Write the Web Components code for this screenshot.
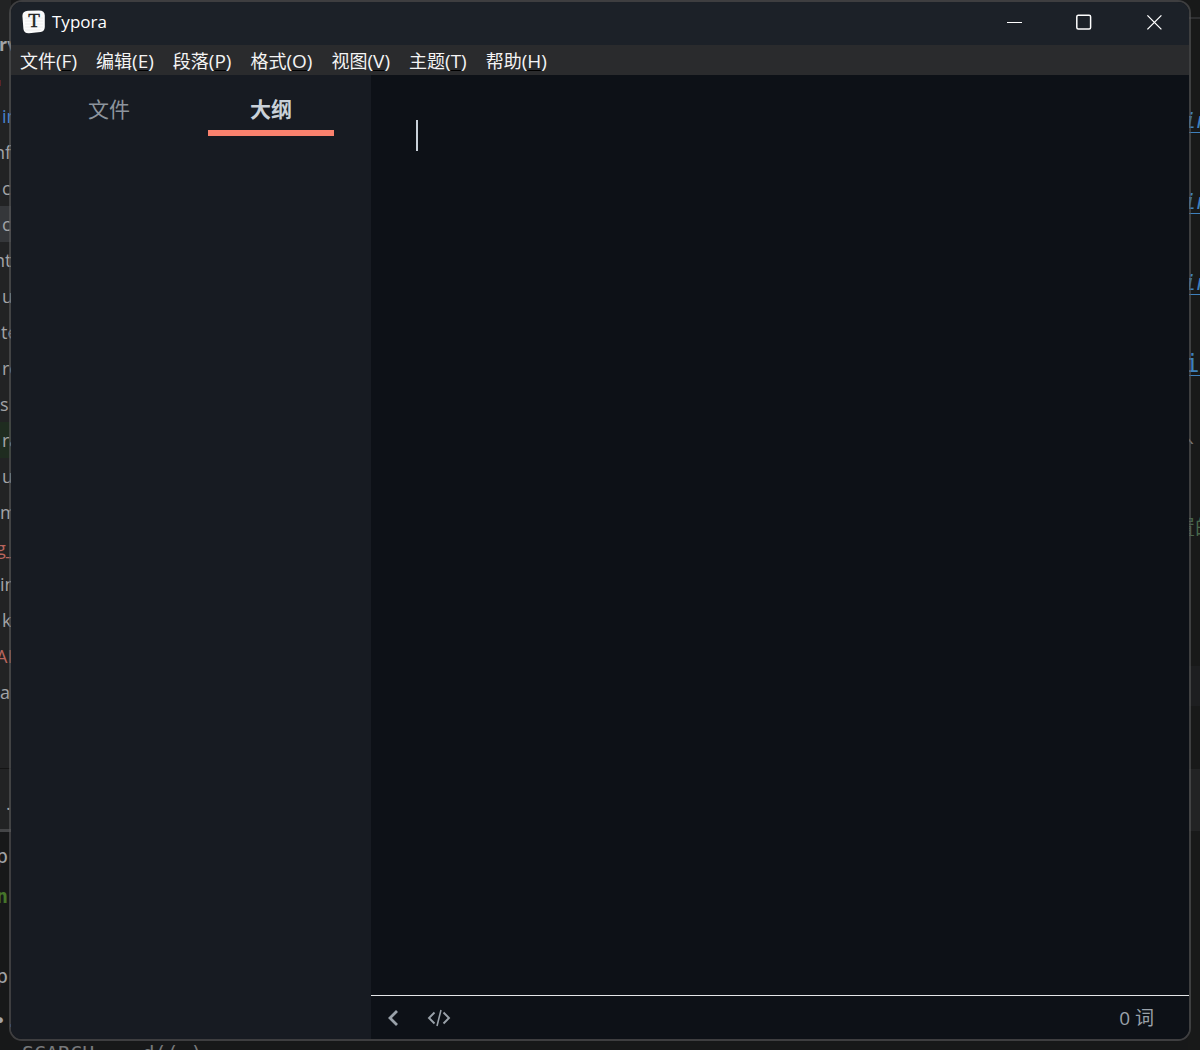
<!DOCTYPE html>
<html lang="zh-CN">
<head>
<meta charset="utf-8">
<title>Typora</title>
<style>
html, body { height: 100%; margin: 0; }
body { background: #171819; overflow: hidden; font-family: "Open Sans", "Noto Sans CJK SC", sans-serif; }
</style>
</head>
<body>
<desktop-scene></desktop-scene>
<script>
const define = (name, html) => {
  const template = document.createElement('template');
  template.innerHTML = html;
  customElements.define(name, class extends HTMLElement {
    constructor() {
      super();
      this.attachShadow({ mode: 'open' }).append(template.content.cloneNode(true));
    }
  });
};

/* editor window that sits behind: left edge */
define('back-explorer', `
<style>
:host { display: flex; flex-direction: column; overflow: hidden; background: #222324; color: #a2a4a7; font: 18px/36px "Open Sans", sans-serif; white-space: pre; }
.head, .row { flex: none; box-sizing: border-box; }
.head { height: 98px; padding-top: 26px; font-weight: 700; }
.head span { display: block; text-indent: -1px; }
.dot { width: 1px; height: 6px; margin-top: 18px; background: #5c2528; }
.row { height: 36px; padding-left: 2px; }
.cut { padding-left: 0; text-indent: -6px; }
.wide { text-indent: -10px; }
.zero { padding-left: 0; }
.blue { color: #4a83cf; }
.red { color: #b8655d; }
.low { text-indent: -4px; }
.on { background: #35373a; }
.new { background: #1f2c20; }
.foot { flex: none; box-sizing: border-box; height: 61px; margin-top: 58px; border-top: 1px solid #141414; padding: 16px 0 0 6px; }
.term { flex: 1; border-top: 3px solid #444547; padding-top: 4px; background: #171819; font: 20px/40px "DejaVu Sans Mono", monospace; }
.term div { height: 40px; text-indent: -4px; }
.term .last { padding-top: 4px; text-indent: -6px; }
.green { color: #45752a; font-weight: 700; }
</style>
<div class="head"><span>rv</span><div class="dot"></div></div>
<div class="row blue">in</div>
<div class="row cut">nf</div>
<div class="row">c</div>
<div class="row on">c</div>
<div class="row cut">nt</div>
<div class="row">u</div>
<div class="row cut wide">ute</div>
<div class="row">re</div>
<div class="row zero">s</div>
<div class="row new">ra</div>
<div class="row">u</div>
<div class="row zero">m</div>
<div class="row red cut low">g_</div>
<div class="row zero">in</div>
<div class="row">k</div>
<div class="row red cut low">AI</div>
<div class="row zero">al</div>
<div class="foot">.</div>
<div class="term"><div>p</div><div class="green">n(</div><div></div><div>p:</div><div class="last">•.</div></div>
`);

/* editor window that sits behind: right edge */
define('back-editor', `
<style>
:host { display: flex; flex-direction: column; overflow: hidden; background: #181919; font: 24px/36px "DejaVu Sans Mono", "Noto Sans CJK SC", monospace; white-space: pre; }
.top { flex: none; height: 17px; }
.rule { flex: none; height: 2px; margin-bottom: 84px; background: #2e2f31; }
a { flex: none; height: 36px; margin-bottom: 45px; color: #3e80bd; font-size: 22px; font-style: italic; text-indent: -5px; text-decoration: underline; text-underline-offset: 4px; text-decoration-thickness: 1px; }
a.upright { font-style: normal; font-size: 24px; text-indent: -3px; text-underline-offset: 3px; margin-bottom: 46px; }
.mark { flex: none; height: 36px; margin-bottom: 46px; color: #777; font-size: 20px; text-indent: -6px; }
.note { flex: none; height: 36px; margin-bottom: 120px; color: #47664a; font-size: 20px; text-indent: -13px; }
.band { flex: none; height: 40px; margin-bottom: 63px; background: #1d1e20; }
.panel { flex: none; height: 62px; background: #222324; }
</style>
<div class="top"></div><div class="rule"></div>
<a href="#">in</a><a href="#">in</a><a href="#">in</a><a href="#" class="upright">i </a>
<div class="mark">^</div>
<div class="note">置的</div>
<div class="band"></div><div class="panel"></div>
`);

define('app-logo', `
<style>:host { display: block; } svg { display: block; }
text { font: 19px "Liberation Serif", serif; fill: #222; stroke: #222; stroke-width: .4; }</style>
<svg width="24" height="24" viewBox="0 0 24 24" aria-hidden="true">
<path d="M6 .8 17 .6Q22.6.8 22.8 5.4L22.8 17Q22.6 21.6 18.6 22L7 23.2Q2 23.4 1.4 19L.4 6Q.4 1.2 6 .8Z" fill="#fbfbfb"/>
<path d="M3 8H21M3 11H21M3 14H21M3 17H21M3 20H19" stroke="#ececec"/>
<text x="12" y="17" text-anchor="middle">T</text></svg>
`);

define('title-bar', `
<style>
:host { display: flex; align-items: center; height: 43px; padding-bottom: 3px; box-sizing: border-box; background: #1c2128; color: #fff; }
app-logo { margin-left: 11px; }
.name { flex: 1; margin-left: 6px; font: 17px/24px "Open Sans", sans-serif; }
.controls { display: flex; height: 100%; }
button { width: 70px; padding: 0; border: 0; background: none; color: inherit; display: grid; place-items: center; }
svg { display: block; fill: none; stroke: currentColor; }
</style>
<app-logo></app-logo><span class="name"><slot></slot></span>
<div class="controls">
<button aria-label="最小化"><svg width="16" height="16"><path d="M1 8.5H16"/></svg></button>
<button aria-label="最大化"><svg width="16" height="16"><rect x=".8" y="1.2" width="13.8" height="13.8" rx="1.5" stroke-width="1.5"/></svg></button>
<button aria-label="关闭"><svg width="16" height="16"><path d="M1.4 1.4 15.4 15.4M15.4 1.4 1.4 15.4" stroke-width="1.3"/></svg></button>
</div>
`);

define('menu-item', `
<style>
:host { display: block; }
button { display: block; padding: 0; border: 0; background: none; color: #f4f4f4; font: 19px/30px "Open Sans", "Noto Sans CJK SC", sans-serif; white-space: nowrap; }
.label { font-size: 18px; }
u { text-decoration-color: #000; text-decoration-thickness: 1px; text-underline-offset: 2px; }
</style>
<button><span class="label"><slot></slot></span>(<u><slot name="key"></slot></u>)</button>
`);

define('menu-bar', `
<style>
:host { display: flex; gap: 19px; height: 30px; padding: 1px 9px 0; box-sizing: border-box; background: #2a2b2d; }
</style>
<slot></slot>
`);

define('side-bar', `
<style>
:host { display: block; box-sizing: border-box; width: 360px; padding: 0 19px 0 17px; background: #171b22; }
nav { display: flex; }
button { flex: 1; height: 61px; margin: 0 18px; padding: 10px 0 0; box-sizing: border-box; border: 0; border-bottom: 6px solid transparent; background: none; color: #8d949d; font: 21px/40px "Noto Sans CJK SC", sans-serif; }
button[aria-selected="true"] { border-color: #fa826e; color: #c9d1d9; font-weight: 700; }
</style>
<nav role="tablist"><button role="tab" aria-selected="false">文件</button><button role="tab" aria-selected="true">大纲</button></nav>
`);

define('writing-area', `
<style>
:host { display: block; flex: 1; padding: 45px; background: #0d1117; }
.caret { width: 2px; height: 31px; background: #c9d1d9; }
</style>
<div class="caret"></div>
`);

define('status-bar', `
<style>
:host { display: flex; align-items: center; box-sizing: border-box; height: 44px; padding: 0 35px 0 10px; border-top: 1px solid #e4e6e8; background: #0d1117; color: #8b949e; }
button { padding: 0; border: 0; background: none; color: #9aa2aa; display: grid; place-items: center; height: 43px; }
.back { width: 24px; }
.code { width: 26px; margin-left: 21px; }
.count { margin-left: auto; font: 19px/30px "Open Sans", "Noto Sans CJK SC", sans-serif; }
svg { display: block; fill: none; stroke: currentColor; }
</style>
<button class="back" aria-label="隐藏侧边栏"><svg width="12" height="18"><path d="M10 2 3 9 10 16" stroke-width="2.8"/></svg></button>
<button class="code" aria-label="源代码模式"><svg width="24" height="18"><path d="M7.5 3.5 2 9 7.5 14.5M16.5 3.5 22 9 16.5 14.5" stroke-width="1.9"/><path d="M14 1 10 17" stroke-width="1.6"/></svg></button>
<button class="count">0 词</button>
`);

define('typora-window', `
<style>
:host { display: flex; flex-direction: column; box-sizing: border-box; border: 2px solid rgba(88, 88, 90, .6); border-radius: 13px; overflow: hidden; background: #0d1117; background-clip: padding-box; }
.body { flex: 1; display: flex; min-height: 0; }
.main { flex: 1; display: flex; flex-direction: column; min-width: 0; }
</style>
<title-bar>Typora</title-bar>
<menu-bar>
<menu-item>文件<span slot="key">F</span></menu-item>
<menu-item>编辑<span slot="key">E</span></menu-item>
<menu-item>段落<span slot="key">P</span></menu-item>
<menu-item>格式<span slot="key">O</span></menu-item>
<menu-item>视图<span slot="key">V</span></menu-item>
<menu-item>主题<span slot="key">T</span></menu-item>
<menu-item>帮助<span slot="key">H</span></menu-item>
</menu-bar>
<div class="body"><side-bar></side-bar><div class="main"><writing-area></writing-area><status-bar></status-bar></div></div>
`);

define('desktop-scene', `
<style>
:host { display: block; position: relative; height: 100vh; overflow: hidden; }
.behind { position: absolute; inset: 0; display: flex; justify-content: space-between; }
back-explorer { width: 11px; }
back-editor { width: 12px; }
.code { position: absolute; left: 22px; top: 1041px; font: 20px/24px "DejaVu Sans Mono", monospace; color: #77797b; white-space: pre; }
typora-window { position: relative; height: calc(100vh - 9px); margin: 0 9px; }
</style>
<div class="behind"><back-explorer></back-explorer><back-editor></back-editor></div>
<div class="code">SCARCH    d(( )</div>
<typora-window></typora-window>
`);
</script>
</body>
</html>
